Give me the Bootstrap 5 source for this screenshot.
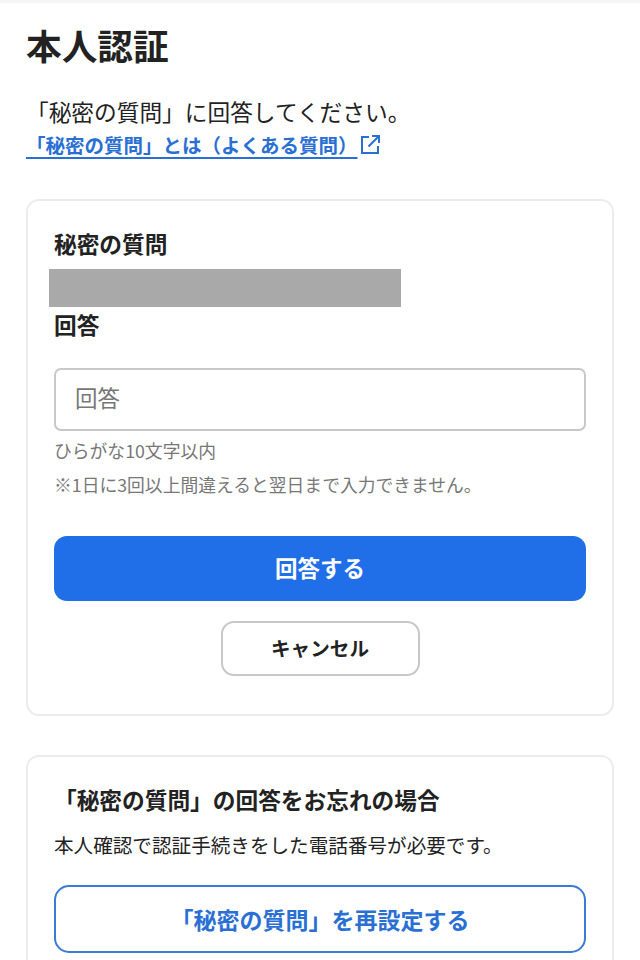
<!DOCTYPE html>
<html lang="ja">
<head>
<meta charset="utf-8">
<title>本人認証</title>
<link href="https://cdn.jsdelivr.net/npm/bootstrap@5.3.0/dist/css/bootstrap.min.css" rel="stylesheet">
<style>
html, body { height: 960px; overflow: hidden; }
body { font-family: "Noto Sans CJK JP", sans-serif; color: #222; background: #fff; }
.top-strip { height: 3px; background: #f5f5f5; }
.page-wrap { padding: 0 26px; }
.page-title { font-size: 35.7px; font-weight: 700; line-height: 52px; margin: 16px 0 0; color: #222; }
.lead-text { font-size: 22.7px; line-height: 30px; margin: 26px 0 0; color: #222; }
.faq-link { display: flex; align-items: center; font-size: 19.5px; font-weight: 700; line-height: 28px; color: #2a70d4; margin-top: 4px; text-decoration: none; }
.faq-link:hover { color: #2a70d4; }
.faq-link span { text-decoration: underline; text-decoration-thickness: 1.5px; text-underline-offset: 4px; }
.faq-link svg { margin-left: 1px; }
.panel { border: 2px solid #ececec; border-radius: 13px; padding: 0 26px; }
.panel-one { margin-top: 40px; height: 517px; padding-top: 25.5px; }
.panel-two { margin-top: 39px; padding-top: 25.5px; height: 300px; }
.field-title { font-size: 22.7px; font-weight: 700; line-height: 34px; margin: 0; color: #222; }
.masked { width: 352px; height: 38px; margin: 8px 0 1px -5px; background: #a9a9a9; }
.answer-input.form-control { height: 63px; border: 2px solid #c8c8c8; border-radius: 7px; font-size: 22.5px; padding: 0 19px 4px; margin-top: 26px; color: #222; }
.answer-input.form-control::placeholder { color: #777; opacity: 1; }
.hint { font-size: 17.8px; line-height: 26px; color: #777; margin: 0; }
.hint-first { margin-top: 6px; }
.hint-second { margin-top: 8px; }
.btn-answer.btn { height: 65px; margin-top: 39px; background: #216fe8; border: 0; border-radius: 13px; color: #fff; font-size: 22.5px; font-weight: 700; }
.btn-cancel.btn { width: 199px; height: 55px; margin-top: 20px; background: #fff; border: 2px solid #c8c8c8; border-radius: 13px; color: #222; font-size: 19.6px; font-weight: 700; }
.body-line { font-size: 19.6px; line-height: 28px; margin: 14px 0 0; color: #222; }
.btn-reset.btn { height: 68px; margin-top: 26.5px; background: #fff; border: 2px solid #3a7bd6; border-radius: 15px; color: #2a70d4; font-size: 23px; font-weight: 700; }
</style>
</head>
<body>
<div class="top-strip"></div>
<main class="page-wrap">
  <h1 class="page-title">本人認証</h1>
  <p class="lead-text">「秘密の質問」に回答してください。</p>
  <a class="faq-link" href="#"><span>「秘密の質問」とは（よくある質問）</span>
    <svg width="22" height="22" viewBox="0 0 22 22" fill="none" stroke="#2a70d4" stroke-width="2" aria-hidden="true"><path d="M10 3H3v16h16v-7"/><path d="M9.5 12.5 19.5 2.5M13 2h7v7"/></svg>
  </a>

  <section class="panel panel-one">
    <h2 class="field-title">秘密の質問</h2>
    <div class="masked"></div>
    <label class="field-title d-block" for="ans">回答</label>
    <input id="ans" class="form-control answer-input" type="text" placeholder="回答">
    <p class="hint hint-first">ひらがな10文字以内</p>
    <p class="hint hint-second">※1日に3回以上間違えると翌日まで入力できません。</p>
    <button type="button" class="btn btn-answer w-100 d-flex align-items-center justify-content-center">回答する</button>
    <div class="d-flex justify-content-center">
      <button type="button" class="btn btn-cancel d-flex align-items-center justify-content-center">キャンセル</button>
    </div>
  </section>

  <section class="panel panel-two">
    <h2 class="field-title">「秘密の質問」の回答をお忘れの場合</h2>
    <p class="body-line">本人確認で認証手続きをした電話番号が必要です。</p>
    <button type="button" class="btn btn-reset w-100 d-flex align-items-center justify-content-center">「秘密の質問」を再設定する</button>
  </section>
</main>
<script src="https://cdn.jsdelivr.net/npm/bootstrap@5.3.0/dist/js/bootstrap.bundle.min.js"></script>
</body>
</html>
